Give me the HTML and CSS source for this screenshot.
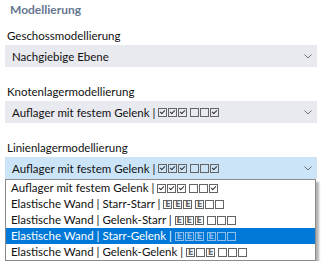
FILE: index.html
```html
<!DOCTYPE html>
<html lang="de">
<head>
  <meta charset="UTF-8">
  <title>Modellierung</title>
  <link rel="stylesheet" href="styles.css">
</head>
<body>
  <div class="panel">
    <div class="title">Modellierung</div>

    <div class="field">
      <div class="label">Geschossmodellierung</div>
      <div class="select">
        <span class="value">Nachgiebige Ebene</span>
        <svg class="chev" width="8" height="5" viewBox="0 0 8 5"><path d="M0.5 0.5 L4 4 L7.5 0.5" fill="none" stroke="#707070" stroke-width="1"/></svg>
      </div>
    </div>

    <div class="field">
      <div class="label">Knotenlagermodellierung</div>
      <div class="select">
        <span class="value">Auflager mit festem Gelenk | <span class="marks"><i class="mk on"></i><i class="mk on"></i><i class="mk on"></i></span> <span class="marks"><i class="mk"></i><i class="mk"></i><i class="mk on"></i></span></span>
        <svg class="chev" width="8" height="5" viewBox="0 0 8 5"><path d="M0.5 0.5 L4 4 L7.5 0.5" fill="none" stroke="#707070" stroke-width="1"/></svg>
      </div>
    </div>

    <div class="field">
      <div class="label">Linienlagermodellierung</div>
      <div class="select active">
        <span class="value">Auflager mit festem Gelenk | <span class="marks"><i class="mk on"></i><i class="mk on"></i><i class="mk on"></i></span> <span class="marks"><i class="mk"></i><i class="mk"></i><i class="mk on"></i></span></span>
        <svg class="chev" width="8" height="5" viewBox="0 0 8 5"><path d="M0.5 0.5 L4 4 L7.5 0.5" fill="none" stroke="#707070" stroke-width="1"/></svg>
      </div>
      <ul class="options">
        <li>Auflager mit festem Gelenk | <span class="marks"><i class="mk on"></i><i class="mk on"></i><i class="mk on"></i></span> <span class="marks"><i class="mk"></i><i class="mk"></i><i class="mk on"></i></span></li>
        <li>Elastische Wand | Starr-Starr | <span class="marks"><i class="mk e">E</i><i class="mk e">E</i><i class="mk e">E</i></span> <span class="marks"><i class="mk e">E</i><i class="mk"></i><i class="mk"></i></span></li>
        <li>Elastische Wand | Gelenk-Starr | <span class="marks"><i class="mk e">E</i><i class="mk e">E</i><i class="mk e">E</i></span> <span class="marks"><i class="mk"></i><i class="mk"></i><i class="mk"></i></span></li>
        <li class="selected">Elastische Wand | Starr-Gelenk | <span class="marks"><i class="mk e">E</i><i class="mk e">E</i><i class="mk e">E</i></span> <span class="marks"><i class="mk e">E</i><i class="mk"></i><i class="mk"></i></span></li>
        <li>Elastische Wand | Gelenk-Gelenk | <span class="marks"><i class="mk e">E</i><i class="mk"></i><i class="mk e">E</i></span> <span class="marks"><i class="mk"></i><i class="mk"></i><i class="mk"></i></span></li>
      </ul>
    </div>
  </div>
</body>
</html>
```

FILE: styles.css
```css
html, body {
  margin: 0;
  padding: 0;
  background: white;
  color: #111;
  font-family: Lato, sans-serif;
  font-size: 11.5px;
}

.panel {
  padding: 2px 5px 0 5px;
}

.title {
  line-height: 16px;
  padding-left: 5px;
  font-size: 12px;
  font-weight: bold;
  color: #66768f;
}

.field {
  margin-top: 10px;
}

.field + .field {
  margin-top: 17px;
}

.label {
  line-height: 16px;
  padding-left: 2px;
  margin-bottom: 1px;
}

.select {
  height: 22px;
  display: flex;
  align-items: center;
  justify-content: space-between;
  padding: 0 5px 0 7px;
  background: #e9e9f0;
}

.select.active {
  background: #cce4f7;
}

.chev {
  display: block;
}

.marks {
  display: inline-flex;
  gap: 1px;
  vertical-align: middle;
  margin-top: -2px;
}

.mk {
  position: relative;
  box-sizing: border-box;
  width: 9px;
  height: 9px;
  border: 1px solid #646464;
  font-family: 'DejaVu Sans', sans-serif;
  font-style: normal;
  font-size: 8px;
  font-weight: bold;
  line-height: 7px;
  text-align: center;
  color: #646464;
}

.mk.on::after {
  content: '';
  position: absolute;
  left: 1px;
  top: 1px;
  width: 4px;
  height: 2px;
  border-left: 1px solid #333;
  border-bottom: 1px solid #333;
  transform: rotate(-45deg);
}

.options {
  list-style: none;
  margin: 0;
  padding: 0;
  width: 309px;
  border: 1px solid #8a8a8a;
  background: white;
  box-shadow: 3px 3px 2px rgba(0, 0, 0, 0.3);
}

.options li {
  height: 16px;
  line-height: 16px;
  padding-left: 5px;
  white-space: nowrap;
}

.options li.selected {
  background: #0078d7;
  color: white;
}

.options li.selected .mk {
  border-color: #8fbdea;
  color: #8fbdea;
}
```
